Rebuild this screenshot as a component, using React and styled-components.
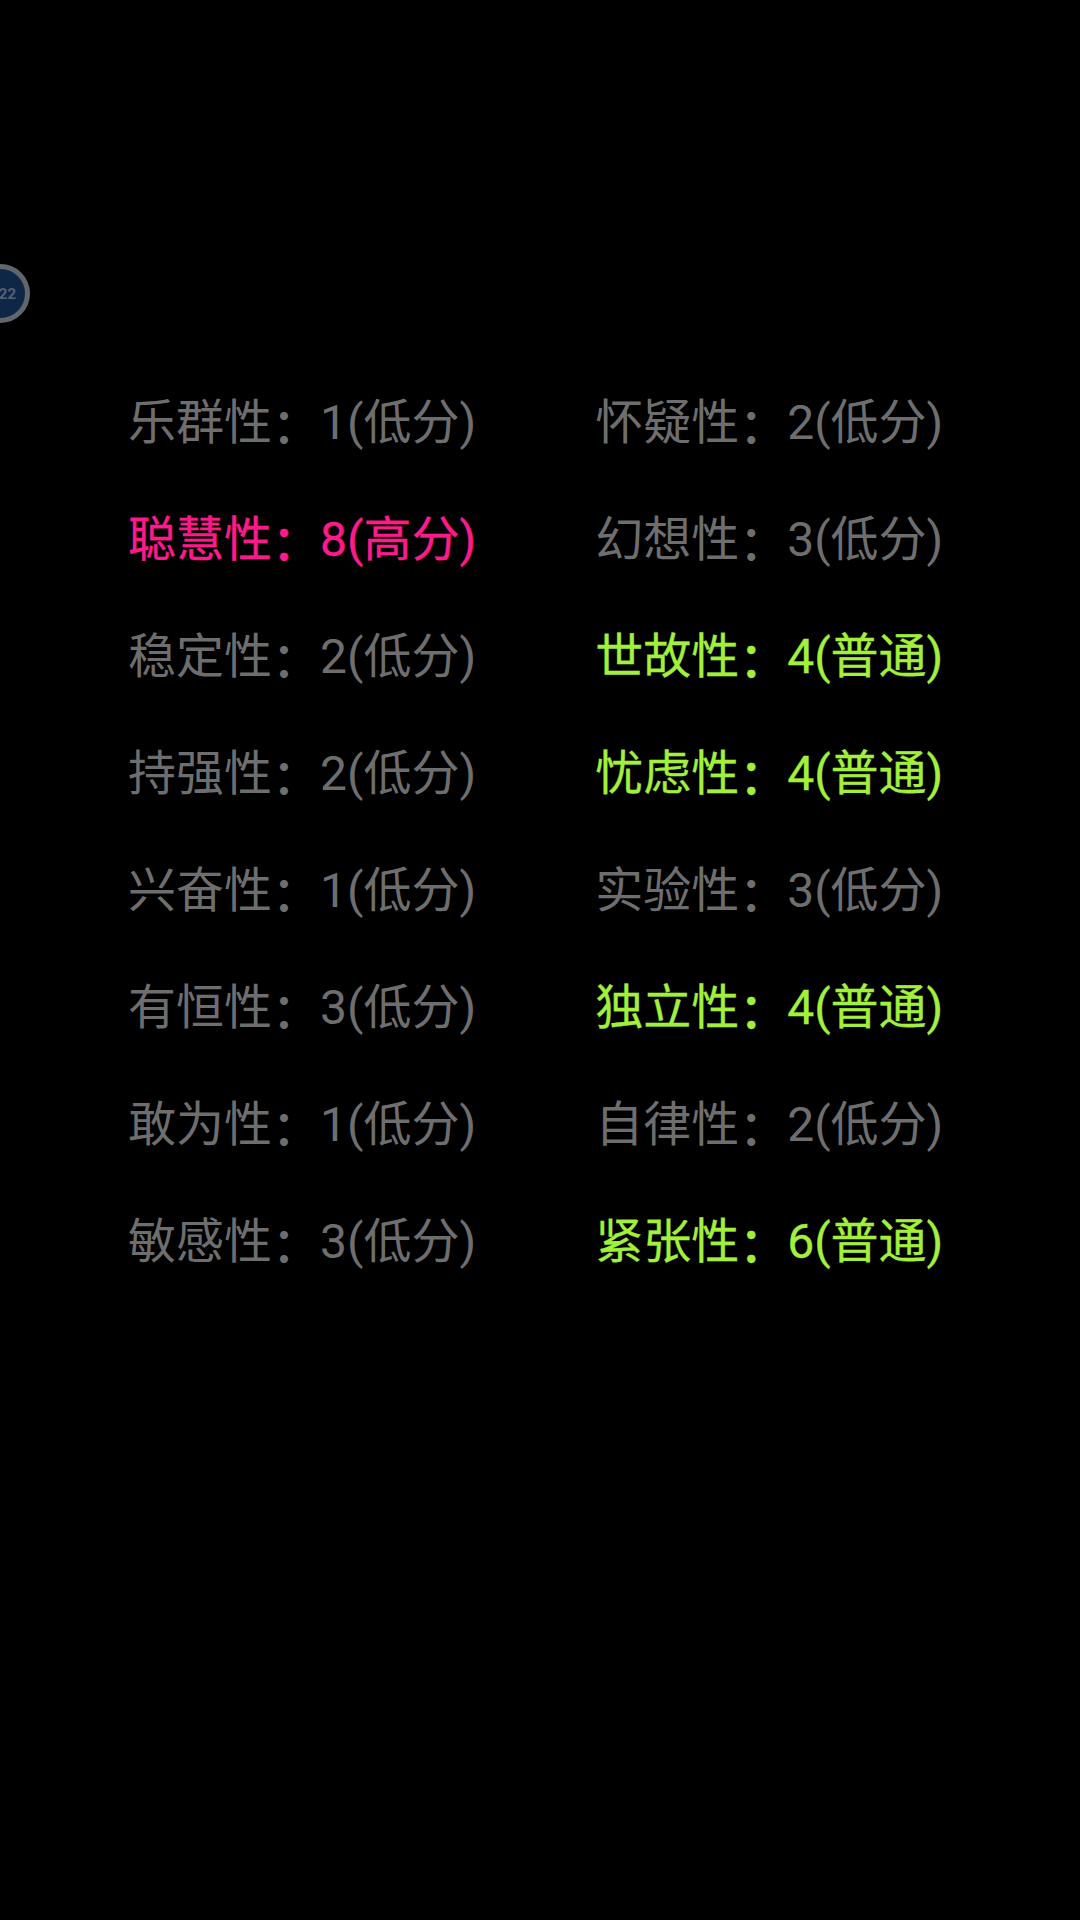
import styled, { createGlobalStyle } from "styled-components";

const leftColumn = [
  ["乐群性", "1(低分)", "low"],
  ["聪慧性", "8(高分)", "high"],
  ["稳定性", "2(低分)", "low"],
  ["持强性", "2(低分)", "low"],
  ["兴奋性", "1(低分)", "low"],
  ["有恒性", "3(低分)", "low"],
  ["敢为性", "1(低分)", "low"],
  ["敏感性", "3(低分)", "low"],
];

const rightColumn = [
  ["怀疑性", "2(低分)", "low"],
  ["幻想性", "3(低分)", "low"],
  ["世故性", "4(普通)", "mid"],
  ["忧虑性", "4(普通)", "mid"],
  ["实验性", "3(低分)", "low"],
  ["独立性", "4(普通)", "mid"],
  ["自律性", "2(低分)", "low"],
  ["紧张性", "6(普通)", "mid"],
];

const levelColors = {
  low: "#6e6e6e",
  mid: "#a2f03c",
  high: "#ff1a8c",
};

const App = () => {
  return (
    <Page>
      <GlobalStyle />
      <Bubble>
        <BubbleLabel>22</BubbleLabel>
      </Bubble>
      <Results>
        <Column>
          {leftColumn.map(([name, score, level]) => (
            <Row key={name} $level={level}>
              {name}
              <Colon>：</Colon>
              {score}
            </Row>
          ))}
        </Column>
        <Column>
          {rightColumn.map(([name, score, level]) => (
            <Row key={name} $level={level}>
              {name}
              <Colon>：</Colon>
              {score}
            </Row>
          ))}
        </Column>
      </Results>
    </Page>
  );
};

export default App;

const GlobalStyle = createGlobalStyle`
  html, body {
    margin: 0;
    padding: 0;
    background: #000;
  }
`;

const Page = styled.div`
  position: relative;
  width: 1080px;
  height: 1920px;
  overflow: hidden;
  background: #000;
  font-family: "Roboto", "Noto Sans CJK SC", sans-serif;
`;

const Bubble = styled.div`
  position: absolute;
  left: -29px;
  top: 264px;
  width: 49px;
  height: 49px;
  border: 5px solid #62666c;
  border-radius: 50%;
  background: #0f2746;
  display: flex;
  align-items: center;
  justify-content: flex-end;
`;

const BubbleLabel = styled.span`
  margin-right: 9px;
  font-size: 15px;
  font-weight: 700;
  color: #556171;
`;

const Results = styled.div`
  display: flex;
  gap: 119px;
  padding: 364px 0 0 128px;
`;

const Column = styled.div`
  display: flex;
  flex-direction: column;
`;

const Row = styled.div`
  height: 117px;
  line-height: 117px;
  font-size: 48px;
  white-space: nowrap;
  -webkit-text-stroke: ${({ $level }) => ($level === "low" ? "0" : "0.3px")} currentColor;
  color: ${({ $level }) => levelColors[$level]};
`;

const Colon = styled.span`
  display: inline-block;
  font-weight: 500;
  transform: translateY(4px);
`;
